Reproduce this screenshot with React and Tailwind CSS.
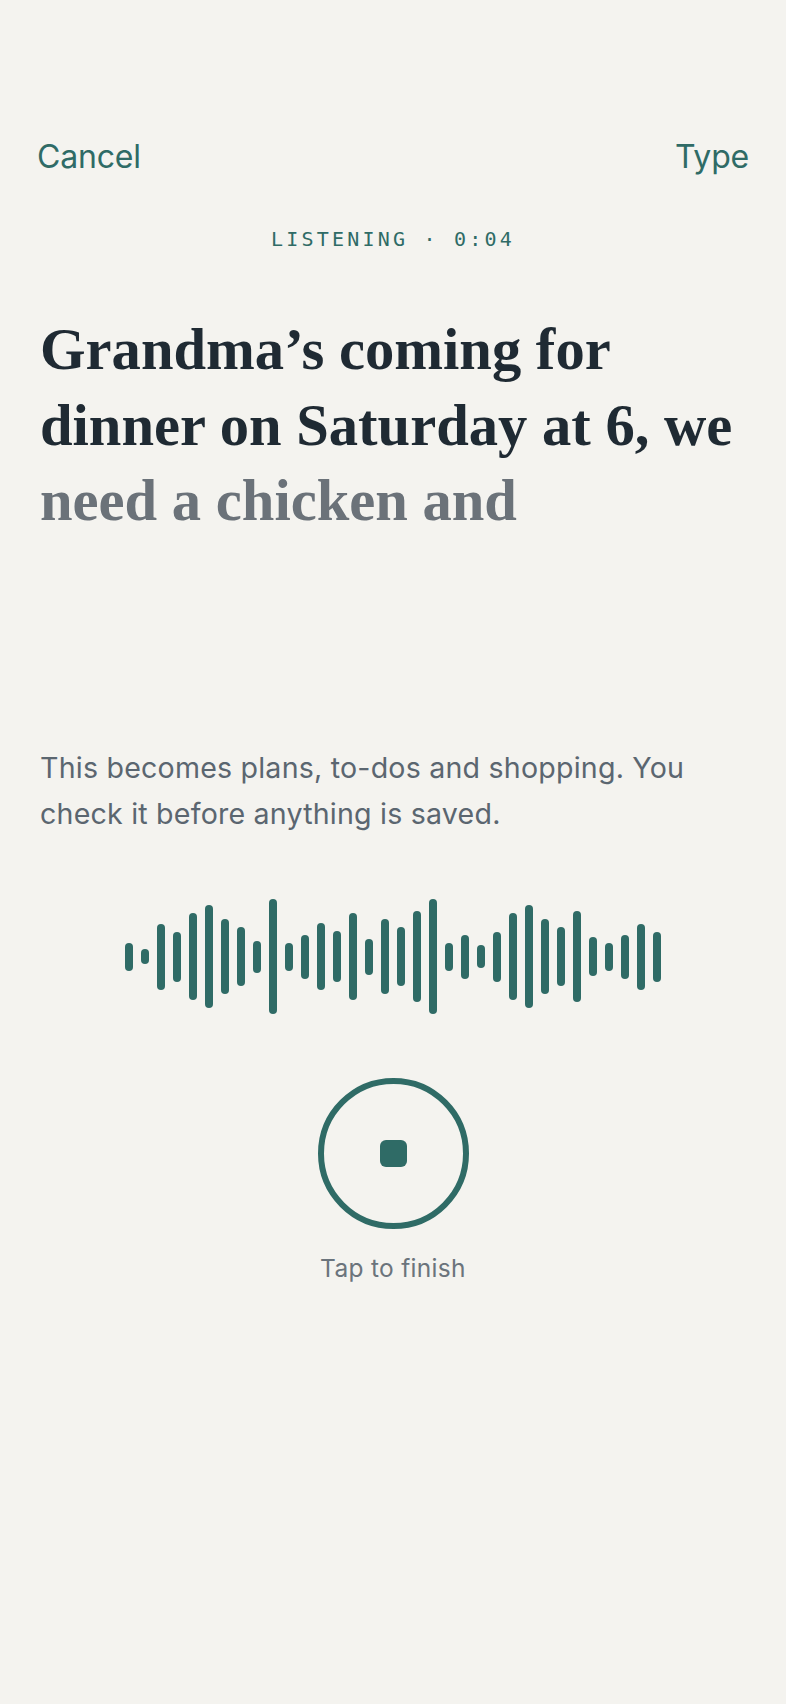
import React from "react";

const BARS = [28, 15, 66, 50, 87, 103, 75, 59, 32, 115, 28, 44, 67, 51, 87, 36, 75, 59, 91, 115, 28, 44, 23, 50, 87, 103, 75, 59, 91, 39, 28, 44, 66, 50];

export default function App() {
  return (
    <div
      className="min-h-[1704px] w-full bg-[#f4f3ef] px-[37px] flex flex-col"
      style={{ fontFamily: "Inter, 'Noto Sans', sans-serif" }}
    >
      <div className="pt-[137px] flex items-center justify-between text-[32px] leading-[40px] text-[#2f6b66]">
        <span className="tracking-[-0.2px]">Cancel</span>
        <span className="tracking-[-0.2px]">Type</span>
      </div>

      <div
        className="mt-[50px] text-center text-[20px] leading-[24px] tracking-[3.2px] text-[#2f6b66]"
        style={{ fontFamily: "'DejaVu Sans Mono', 'Liberation Mono', monospace" }}
      >
        LISTENING · 0:04
      </div>

      <h1
        className="mt-[61px] pl-[3px] text-[58.6px] leading-[75.5px] font-bold"
        style={{ fontFamily: "'Liberation Serif', serif" }}
      >
        <span className="block whitespace-nowrap text-[#1f2a33]">Grandma’s coming for</span>
        <span className="block whitespace-nowrap text-[#1f2a33]">dinner on Saturday at 6, we</span>
        <span className="block whitespace-nowrap text-[#6b7279]">need a chicken and</span>
      </h1>

      <p className="mt-[206px] pl-[3px] text-[28.6px] leading-[46px] text-[#5b6670] tracking-[0.2px]">
        This becomes plans, to-dos and shopping. You
        <br />
        check it before anything is saved.
      </p>

      <div className="mt-[62px] h-[116px] flex items-center justify-center gap-[8px]">
        {BARS.map((h, i) => (
          <div key={i} className="w-[8px] rounded-full bg-[#2f6b66]" style={{ height: h }} />
        ))}
      </div>

      <div className="mt-[63px] flex flex-col items-center">
        <div className="w-[151px] h-[151px] rounded-full border-[6px] border-[#2f6b66] flex items-center justify-center">
          <div className="w-[27px] h-[27px] rounded-[6px] bg-[#2f6b66]" />
        </div>
        <div className="mt-[25px] text-[24.5px] leading-[28px] tracking-[0.3px] text-[#6b747c]">Tap to finish</div>
      </div>
    </div>
  );
}
